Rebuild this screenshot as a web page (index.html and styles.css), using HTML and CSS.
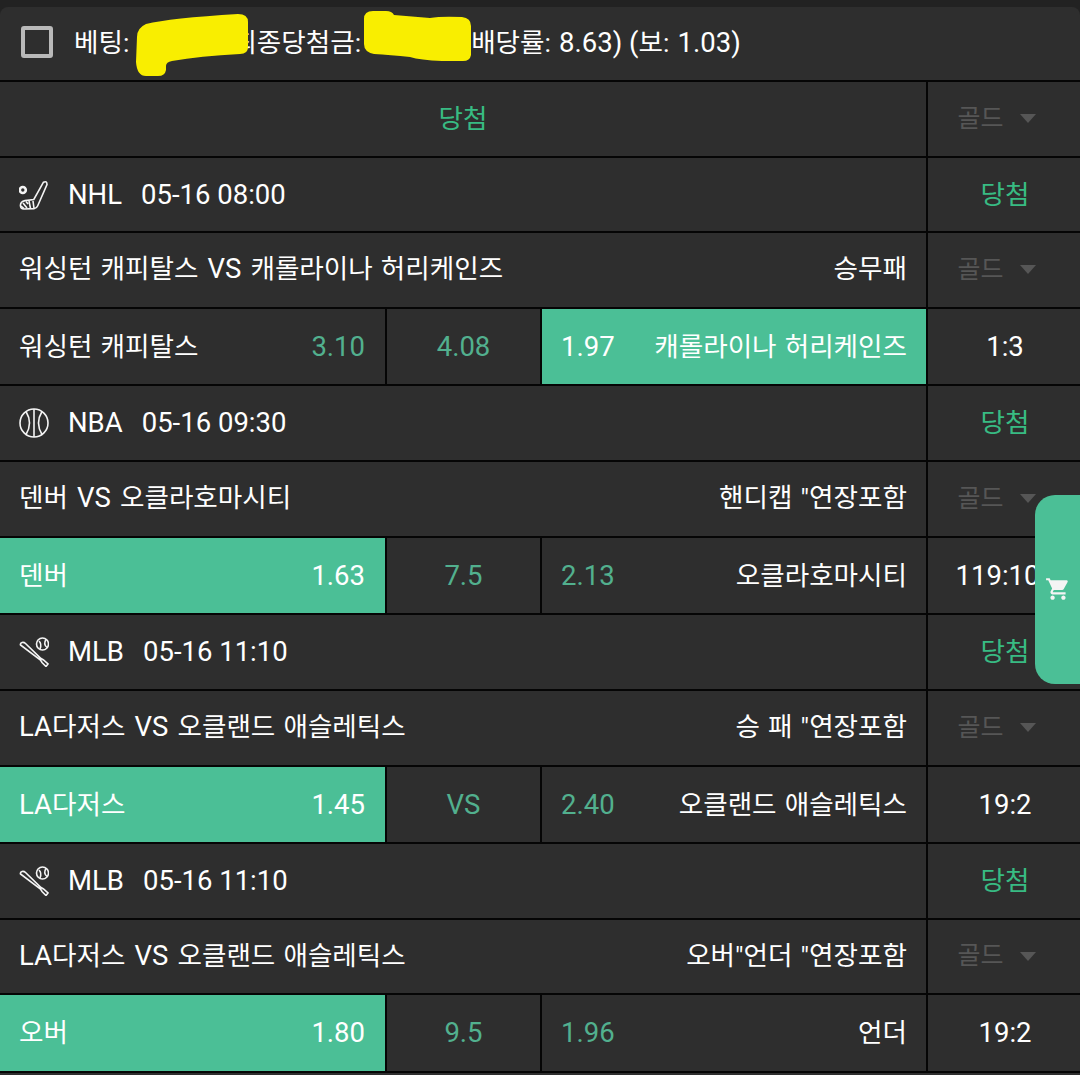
FILE: index.html
```html
<!DOCTYPE html>
<html lang="ko">
<head>
<meta charset="utf-8">
<title>베팅</title>
<link rel="stylesheet" href="styles.css">
</head>
<body>
<main class="slip">
  <header class="summary">
    <span class="check"></span>
    <span class="summary-text">베팅:<span class="gap-a"></span>최종당첨금:<span class="gap-b"></span>배당률: <span class="num">8.63) (</span>보: <span class="num">1.03)</span></span>
    <svg class="scribble" viewBox="0 0 1080 82" width="1080" height="82" aria-hidden="true">
      <path d="M137 37Q137 28 146 24Q170 18 238 14Q248 14 248 22V47Q248 54 240 54Q200 56 172 61Q166 62 166 66V70Q165 76 158 76H146Q137 76 136 62Z"/>
      <path d="M364 19Q364 11 373 11H386Q392 11 394 15L430 18Q441 16 462 17Q471 18 471 26V55Q470 61 463 61H442Q420 60 410 57Q390 55 374 54Q364 52 364 44Z"/>
    </svg>
  </header>

  <section class="row">
    <div class="main center win">당첨</div>
    <div class="side gold">골드<i class="caret"></i></div>
  </section>

  <section class="row">
    <div class="main league">
      <svg class="sport" viewBox="0 0 30 30" aria-hidden="true"><circle cx="3.800" cy="10" r="3" stroke-width="2.600"/><path d="M24.500 2.200 14.800 19.500 6 20.600Q1.500 21.400 1.400 25.500 1.500 29 5 29L15 28.600Q17.600 28.400 18.600 26L28 4.500Q28 .5 24.500 2.200Z"/><path d="M10 21 11.500 28.500M14 21 15 28.500M4 23 8 28M7 21.500 9 24M2 26 5 28.500"/></svg>
      <span class="num">NHL</span><span class="num">05-16 08:00</span>
    </div>
    <div class="side win">당첨</div>
  </section>

  <section class="row">
    <div class="main split"><span>워싱턴 캐피탈스 <span class="num vs">VS</span> 캐롤라이나 허리케인즈</span><span>승무패</span></div>
    <div class="side gold">골드<i class="caret"></i></div>
  </section>

  <section class="row">
    <div class="main odds">
      <div class="pick"><span>워싱턴 캐피탈스</span><b>3.10</b></div>
      <div class="mid">4.08</div>
      <div class="pick on"><b>1.97</b><span>캐롤라이나 허리케인즈</span></div>
    </div>
    <div class="side num">1:3</div>
  </section>

  <section class="row">
    <div class="main league">
      <svg class="sport" viewBox="0 0 30 30" aria-hidden="true"><circle cx="15" cy="15" r="14"/><path d="M15 1V29M7 3.500Q14 15 7 26.500M23 3.500Q16 15 23 26.500"/></svg>
      <span class="num">NBA</span><span class="num">05-16 09:30</span>
    </div>
    <div class="side win">당첨</div>
  </section>

  <section class="row">
    <div class="main split"><span>덴버 <span class="num vs">VS</span> 오클라호마시티</span><span>핸디캡 "연장포함</span></div>
    <div class="side gold">골드<i class="caret"></i></div>
  </section>

  <section class="row">
    <div class="main odds">
      <div class="pick on"><span>덴버</span><b>1.63</b></div>
      <div class="mid">7.5</div>
      <div class="pick"><b>2.13</b><span>오클라호마시티</span></div>
    </div>
    <div class="side num long">119:10</div>
  </section>

  <section class="row">
    <div class="main league">
      <svg class="sport" viewBox="0 0 30 30" aria-hidden="true"><circle cx="23.500" cy="7" r="6"/><path d="M20 4Q23 7 21 12M27 2.500Q24 7 28 10.500"/><path d="M1.500 8Q1 6 3 5.500 5 5 6.500 6.500L22 21.500 24.500 23 29 27 27 29.500 23 25.500 21.500 23Z"/></svg>
      <span class="num">MLB</span><span class="num">05-16 11:10</span>
    </div>
    <div class="side win">당첨</div>
  </section>

  <section class="row">
    <div class="main split"><span><span class="num">LA</span>다저스 <span class="num vs">VS</span> 오클랜드 애슬레틱스</span><span>승 패 "연장포함</span></div>
    <div class="side gold">골드<i class="caret"></i></div>
  </section>

  <section class="row">
    <div class="main odds">
      <div class="pick on"><span><span class="num">LA</span>다저스</span><b>1.45</b></div>
      <div class="mid">VS</div>
      <div class="pick"><b>2.40</b><span>오클랜드 애슬레틱스</span></div>
    </div>
    <div class="side num">19:2</div>
  </section>

  <section class="row">
    <div class="main league">
      <svg class="sport" viewBox="0 0 30 30" aria-hidden="true"><circle cx="23.500" cy="7" r="6"/><path d="M20 4Q23 7 21 12M27 2.500Q24 7 28 10.500"/><path d="M1.500 8Q1 6 3 5.500 5 5 6.500 6.500L22 21.500 24.500 23 29 27 27 29.500 23 25.500 21.500 23Z"/></svg>
      <span class="num">MLB</span><span class="num">05-16 11:10</span>
    </div>
    <div class="side win">당첨</div>
  </section>

  <section class="row">
    <div class="main split"><span><span class="num">LA</span>다저스 <span class="num vs">VS</span> 오클랜드 애슬레틱스</span><span>오버"언더 "연장포함</span></div>
    <div class="side gold">골드<i class="caret"></i></div>
  </section>

  <section class="row">
    <div class="main odds">
      <div class="pick on"><span>오버</span><b>1.80</b></div>
      <div class="mid">9.5</div>
      <div class="pick"><b>1.96</b><span>언더</span></div>
    </div>
    <div class="side num">19:2</div>
  </section>
</main>

<aside class="cart-tab">
  <svg viewBox="0 0 24 24" width="26" height="26" aria-hidden="true"><path d="M7 18c-1.100 0-2 .9-2 2s.9 2 2 2 2-.9 2-2-.9-2-2-2zM1 2v2h2l3.600 7.590-1.350 2.450c-.16.28-.25.61-.25.960 0 1.100.9 2 2 2h12v-2H7.420c-.14 0-.25-.11-.25-.25l.03-.12.9-1.630h7.450c.75 0 1.410-.41 1.750-1.030l3.580-6.490A1 1 0 0 0 20 4H5.210l-.94-2H1zm16 16c-1.100 0-2 .9-2 2s.9 2 2 2 2-.9 2-2-.9-2-2-2z"/></svg>
</aside>
</body>
</html>
```
FILE: styles.css
```css
* { box-sizing: border-box; }
html, body { margin: 0; height: 1075px; overflow: hidden; }
body {
  background: #222;
  color: #fff;
  font-family: Roboto, "Noto Sans CJK KR", sans-serif;
  font-size: 26.6px;
  line-height: 32px;
  word-spacing: 1.5px;
  padding-top: 7px;
}
.num, .pick b, .mid { font-size: 27.5px; word-spacing: 0; }
.vs { margin: 0 1px; }
.slip { background: #2e2e2e; border-radius: 8px 8px 0 0; min-height: 1068px; }
.summary {
  position: relative;
  height: 75px;
  display: flex;
  align-items: center;
  padding: 0 0 2px 21px;
  border-bottom: 2px solid #050505;
}
.check {
  width: 32px;
  height: 32px;
  margin-bottom: 2px;
  border: 4px solid #b9b9b9;
  border-radius: 3px;
  margin-right: 21px;
  flex: none;
}
.summary-text { white-space: nowrap; }
.gap-a { display: inline-block; width: 103px; }
.gap-b { display: inline-block; width: 110px; }
.scribble { position: absolute; left: 0; top: -7px; fill: #f9ee00; }
.row {
  height: 76px;
  display: flex;
  border-bottom: 2px solid #050505;
}
.row:nth-child(3), .row:nth-child(13) { height: 75px; }
.row:nth-child(5), .row:nth-child(8), .row:nth-child(11) { height: 77px; }
.row:last-child { height: 78px; }
.main {
  width: 928px;
  border-right: 2px solid #050505;
  display: flex;
  align-items: center;
  padding: 0 19px 0 19px;
  flex: none;
}
.center { justify-content: center; }
.side {
  flex: 1;
  display: flex;
  align-items: center;
  justify-content: center;
  white-space: nowrap;
  padding-left: 2px;
}
.long { padding: 0 13px 0 0; }
.win { color: #38bb83; }
.gold {
  color: #565656;
  font-size: 25px;
  gap: 16px;
  padding: 0 15px 1px 0;
}
.caret {
  width: 0;
  height: 0;
  border: 8.500px solid transparent;
  border-top: 9px solid #565656;
  border-bottom: 0;
}
.league { gap: 19px; }
.sport {
  width: 30px;
  height: 30px;
  flex: none;
  fill: none;
  stroke: #f4f4f4;
  stroke-width: 1.600;
}
.split { justify-content: space-between; padding-bottom: 2px; }
.odds { padding: 0; align-items: stretch; }
.pick {
  display: flex;
  align-items: center;
  justify-content: space-between;
  padding: 0 20px 0 19px;
  width: 387px;
  border-right: 2px solid #050505;
  flex: none;
}
.pick + .mid + .pick { width: auto; flex: 1; border-right: 0; padding-right: 19px; }
.pick b { font-weight: 400; color: #52b08e; }
.pick.on { background: #4bbf96; }
.pick.on b { color: #fff; }
.mid {
  width: 155px;
  flex: none;
  display: flex;
  align-items: center;
  justify-content: center;
  color: #52b08e;
  border-right: 2px solid #050505;
}
.cart-tab {
  position: fixed;
  right: 0;
  top: 495px;
  width: 45px;
  height: 189px;
  background: #4bbf96;
  border-radius: 20px 0 0 20px;
  display: flex;
  align-items: center;
  justify-content: center;
  padding-bottom: 2px;
  fill: #f4f4f4;
}
```
